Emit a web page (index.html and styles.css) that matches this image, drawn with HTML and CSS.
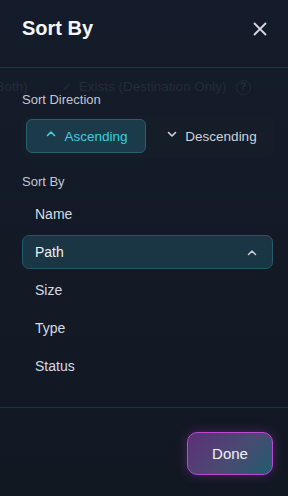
FILE: index.html
```html
<!DOCTYPE html>
<html>
<head>
<meta charset="utf-8">
<link rel="stylesheet" href="styles.css">
</head>
<body>
<div class="dialog">
  <div class="header">
    <h1 class="title">Sort By</h1>
    <button class="close" aria-label="Close">
      <svg width="14" height="14" viewBox="0 0 14 14"><path d="M1.5 1.5 L12.5 12.5 M12.5 1.5 L1.5 12.5" stroke="#d4d9e0" stroke-width="1.8" stroke-linecap="round" fill="none"/></svg>
    </button>
  </div>
  <div class="body">
    <div class="ghost">
      <span class="ghost-a">(Both)</span>
      <span class="ghost-check">✓</span>
      <span>Exists (Destination Only)</span>
      <span class="ghost-help">?</span>
    </div>
    <div class="label">Sort Direction</div>
    <div class="segment">
      <button class="seg seg-active">
        <svg width="10" height="7" viewBox="0 0 10 7"><polyline points="1.5,5.5 5,2 8.5,5.5" stroke="currentColor" stroke-width="1.6" fill="none" stroke-linecap="round" stroke-linejoin="round"/></svg>
        <span>Ascending</span>
      </button>
      <button class="seg">
        <svg width="10" height="7" viewBox="0 0 10 7"><polyline points="1.5,1.5 5,5 8.5,1.5" stroke="currentColor" stroke-width="1.6" fill="none" stroke-linecap="round" stroke-linejoin="round"/></svg>
        <span>Descending</span>
      </button>
    </div>
    <div class="label label-sort">Sort By</div>
    <ul class="list">
      <li class="item">Name</li>
      <li class="item item-active"><span>Path</span>
        <svg width="10" height="7" viewBox="0 0 10 7"><polyline points="1.5,5.5 5,2 8.5,5.5" stroke="#c9ced6" stroke-width="1.5" fill="none" stroke-linecap="round" stroke-linejoin="round"/></svg>
      </li>
      <li class="item">Size</li>
      <li class="item">Type</li>
      <li class="item">Status</li>
    </ul>
  </div>
  <div class="footer">
    <button class="done">Done</button>
  </div>
</div>
</body>
</html>
```

FILE: styles.css
```css
* { box-sizing: border-box; }
html, body { margin: 0; padding: 0; }
body {
  width: 288px;
  height: 496px;
  overflow: hidden;
  font-family: "Liberation Sans", Arial, sans-serif;
  background: #12181f;
}
.dialog {
  height: 496px;
  display: flex;
  flex-direction: column;
  background: linear-gradient(180deg, #141c2b 0%, #131a26 50%, #121822 100%);
  position: relative;
}
.header {
  height: 68px;
  padding: 14px 16px 0 22px;
  display: flex;
  justify-content: space-between;
  align-items: flex-start;
  border-bottom: 1px solid #1c3843;
}
.title {
  margin: 0;
  font-size: 20px;
  line-height: 28px;
  font-weight: 700;
  color: #f4f6f8;
}
.close {
  margin-top: 3px;
  width: 24px;
  height: 24px;
  padding: 0;
  border: none;
  background: transparent;
  display: flex;
  align-items: center;
  justify-content: center;
}
.body {
  flex: 1;
  position: relative;
  padding: 24px 15px 0 22px;
}
.ghost {
  position: absolute;
  top: 10px;
  left: -9px;
  display: flex;
  align-items: center;
  white-space: nowrap;
  font-size: 13.5px;
  line-height: 18px;
  color: #232c39;
}
.ghost-a { margin-right: 34px; }
.ghost-check { margin-right: 7px; font-size: 12px; }
.ghost-help {
  margin-left: 9px;
  width: 15px;
  height: 15px;
  border-radius: 50%;
  border: 1.5px solid #222b38;
  font-size: 10px;
  line-height: 12px;
  text-align: center;
  font-weight: 700;
}
.label {
  position: relative;
  font-size: 13px;
  line-height: 16px;
  color: #c3c8d0;
}
.segment {
  position: relative;
  margin-top: 8px;
  width: 252px;
  height: 42px;
  padding: 3px 4px 5px 4px;
  border-radius: 8px;
  background: #151d29;
  display: grid;
  grid-template-columns: 120px 1fr;
  gap: 2px;
}
.seg {
  display: flex;
  align-items: center;
  justify-content: center;
  gap: 8px;
  border: 1px solid transparent;
  border-radius: 6px;
  background: transparent;
  font-family: inherit;
  font-size: 13.5px;
  color: #cfd4db;
  padding: 0 0 0 6px;
}
.seg svg { margin-top: -4px; }
.seg-active {
  background: #1b3b4a;
  border-color: #28606e;
  color: #3ccfe0;
  padding: 0 0 0 2px;
}
.seg-active svg { margin-top: -5px; }
.label-sort { margin-top: 16px; }
.list {
  list-style: none;
  margin: 7px 0 0 0;
  padding: 0;
  display: flex;
  flex-direction: column;
  gap: 4px;
}
.item {
  height: 34px;
  padding: 0 15px 0 12px;
  display: flex;
  align-items: center;
  justify-content: space-between;
  border: 1px solid transparent;
  border-radius: 7px;
  font-size: 14px;
  color: #d5dae1;
}
.item-active {
  background: #1a3543;
  border-color: #23596b;
  color: #eef2f6;
}
.footer {
  height: 89px;
  border-top: 1px solid #1a323c;
  padding: 24px 15px 0 0;
  display: flex;
  justify-content: flex-end;
  align-items: flex-start;
}
.done {
  width: 86px;
  height: 43px;
  border-radius: 10px;
  border: 1.5px solid #bd48d6;
  background: linear-gradient(135deg, #5d2f78 0%, #4a4a72 55%, #1f5e6e 100%);
  color: #f2f2f6;
  font-family: inherit;
  font-size: 15px;
  box-shadow: 0 0 12px rgba(170, 60, 200, 0.35);
}
```
